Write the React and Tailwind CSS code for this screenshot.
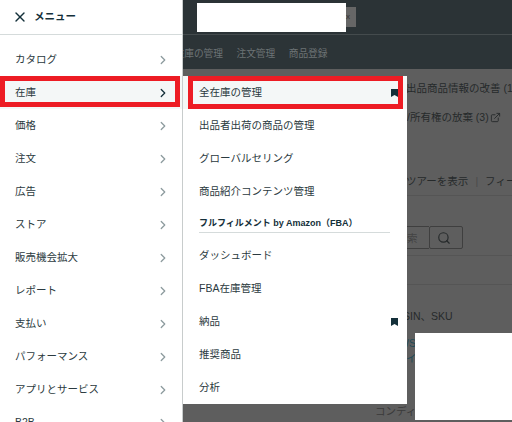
import { ChevronRight, Search, X, ExternalLink } from "lucide-react";

const mainItems = [
  "カタログ",
  "在庫",
  "価格",
  "注文",
  "広告",
  "ストア",
  "販売機会拡大",
  "レポート",
  "支払い",
  "パフォーマンス",
  "アプリとサービス",
  "B2B",
];

const font = "font-['Liberation_Sans','Noto_Sans_CJK_JP',sans-serif]";

const Bookmark = () => (
  <svg width="7" height="8" viewBox="0 0 7 8" className="shrink-0">
    <path d="M0 0h7v8L3.5 6 0 8z" fill="#14303a" />
  </svg>
);

const SubRow = ({ label, active, marked }) => (
  <div className={`h-[33px] flex items-center justify-between pl-[16px] pr-[9px] ${active ? "bg-[#f4f7f7]" : ""}`}>
    <span>{label}</span>
    {marked && <Bookmark />}
  </div>
);

// dimmed page behind the menu
const Page = () => (
  <div className="h-full flex flex-col bg-[#5e5e5e] text-[#262a2b] text-[10.5px] leading-[16px] whitespace-nowrap overflow-hidden">
    <div className="h-[35px] shrink-0 bg-[#2b3336] border-b border-[#444b4d] flex items-center pl-[197px]">
      <div className="w-[149px] h-[29px] bg-white" />
      <div className="w-[10px] h-[20px] bg-[#666] text-[8px] text-[#333] leading-[20px]">x</div>
    </div>
    <div className="h-[34px] shrink-0 bg-[#2c3437] flex items-center gap-[13.5px] pl-[140px] pt-[3px] text-[9.7px] text-[#6d7375]">
      <span className="w-[83px] text-right">在庫の管理</span>
      <span>注文管理</span>
      <span>商品登録</span>
    </div>
    <div className="pl-[406px] flex flex-col">
      <span className="mt-[11px]">出品商品情報の改善 (1</span>
      <span className="mt-[13px] pl-px flex items-center gap-[1px]">
        /所有権の放棄 (3)
        <ExternalLink size={11} strokeWidth={2} />
      </span>
      <span className="mt-[48px] flex items-center gap-[7px]">
        ツアーを表示 <span className="text-[#4a4a4a]">|</span> フィー
      </span>
      <div className="mt-[6px] h-px bg-[#555]" />
      <div className="mt-[30px] flex">
        <div className="w-[23px] h-[23px] border-y border-[#3f3f3f] flex items-center pl-px text-[#444]">索</div>
        <div className="w-[34px] h-[23px] border border-[#3f3f3f] rounded-[2px] flex items-center pl-[7px]">
          <Search size={14} strokeWidth={2} />
        </div>
      </div>
      <div className="mt-[6px] h-px bg-[#555]" />
      <div className="mt-[28px] h-px bg-[#555]" />
      <span className="mt-[23px] -ml-[10px]">ASIN、SKU</span>
      <span className="mt-[12px] leading-[15px] text-[#1f4a55]">/S</span>
      <span className="leading-[15px] text-[#1f4a55]">イ</span>
      <span className="mt-[37px] -ml-[31px] text-[#3a3a3a]">コンディ</span>
    </div>
  </div>
);

export default function App() {
  return (
    <div className={`${font} relative w-[512px] h-[422px] overflow-hidden text-[10.5px] text-[#2b3a40]`}>
      <Page />

      {/* left menu */}
      <div className="absolute inset-y-0 left-0 w-[183px] bg-white border-r border-[#c8cccc] overflow-hidden">
        <div className="h-[35px] border-b border-[#d5dbdb] flex items-center pl-[11.5px] gap-[6.5px] font-bold text-[#14303a]">
          <X size={16} strokeWidth={2} />
          <span>メニュー</span>
        </div>
        <div className="pt-[8px]">
          {mainItems.map((item) => (
            <div
              key={item}
              className={`h-[33px] flex items-center justify-between pl-[15px] pr-[12.5px] ${item === "在庫" ? "bg-[#f4f7f7]" : ""}`}
            >
              <span>{item}</span>
              <ChevronRight
                size={14}
                strokeWidth={2.2}
                className={item === "在庫" ? "text-[#14303a]" : "text-[#8d9b9e]"}
              />
            </div>
          ))}
        </div>
      </div>

      {/* sub menu */}
      <div className="absolute left-[183px] top-[76px] w-[224px] h-[328px] bg-white">
        <SubRow label="全在庫の管理" active marked />
        <SubRow label="出品者出荷の商品の管理" />
        <SubRow label="グローバルセリング" />
        <SubRow label="商品紹介コンテンツ管理" />
        <div className="ml-[16px] mr-[17px] mt-[2px] mb-[6px] h-[23px] pt-[5px] flex items-center font-bold text-[#14303a] text-[9px] border-b border-[#d5dbdb]">
          フルフィルメント by Amazon（FBA）
        </div>
        <SubRow label="ダッシュボード" />
        <SubRow label="FBA在庫管理" />
        <SubRow label="納品" marked />
        <SubRow label="推奨商品" />
        <SubRow label="分析" />
      </div>

      {/* white cover + red annotation boxes */}
      <div className="absolute left-[415px] top-[333px] w-[97px] h-[87px] bg-white" />
      <div className="absolute left-0 top-[76px] w-[180px] h-[31px] border-[5px] border-[#ed1c24]" />
      <div className="absolute left-[188px] top-[76px] w-[215px] h-[33px] border-[5px] border-[#ed1c24]" />
    </div>
  );
}
